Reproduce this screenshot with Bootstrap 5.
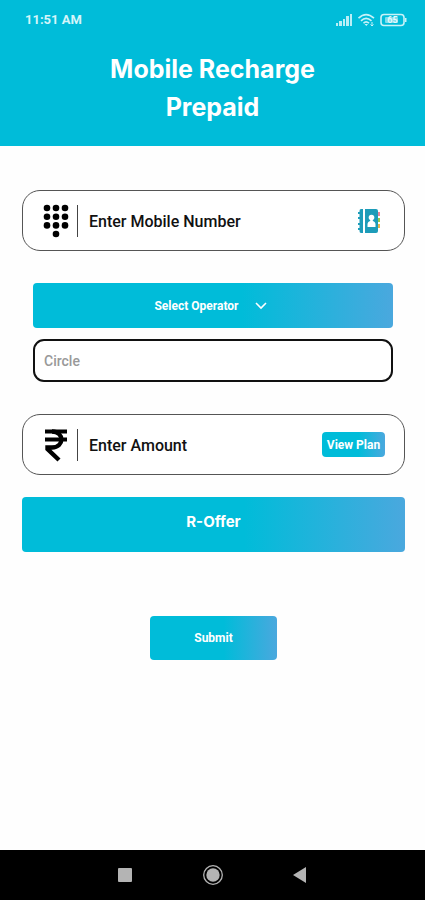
<!DOCTYPE html>
<html lang="en">
<head>
<meta charset="utf-8">
<meta name="viewport" content="width=device-width, initial-scale=1">
<title>Mobile Recharge Prepaid</title>
<link href="https://cdn.jsdelivr.net/npm/bootstrap@5.3.0/dist/css/bootstrap.min.css" rel="stylesheet">
<style>
  :root { --brand: #00bcd9; --brand-end: #4aa8de; --fade: linear-gradient(90deg, var(--brand) 58%, var(--brand-end)); }
  body { font-family: Roboto, "Liberation Sans", sans-serif; background: #fefefe; color: #111; }
  .app-header { background: var(--brand); padding-bottom: 20px; }
  .status-bar { height: 40px; padding: 0 17px 0 25px; font-size: 13px; font-weight: 700; color: #d5f5fa; }
  .app-title { font-family: Inter, sans-serif; font-size: 25px; line-height: 38px; font-weight: 700; padding: 10px 80px 0; }
  .recharge-form { padding: 44px 20px 0 22px; }
  .field-box { height: 61px; border: 1px solid #555; border-radius: 18px; padding: 0 19px 0 20px; background: #fff; }
  .field-icon { border-right: 1px solid #444; width: 35px; height: 32px; }
  .field-input, .field-input:focus { border: 0; background: transparent; box-shadow: none; padding: 2px 0 0 11px; font-size: 16px; font-weight: 500; min-width: 0; }
  .field-input::placeholder { color: #111; opacity: 1; }
  .fade-btn, .fade-btn:hover, .fade-btn:active { background: var(--fade); color: #fff; border: 0; border-radius: 4px; }
  .inset-group { margin: 32px 12px 32px 11px; gap: 11px; }
  .operator-select { height: 45px; border: 0; border-radius: 4px; color: #fff; font-size: 12px; font-weight: 700; text-align-last: center; padding: 0 33px 0 0;
    background-image: url("data:image/svg+xml,%3Csvg xmlns='http://www.w3.org/2000/svg' viewBox='0 0 12 8'%3E%3Cpath d='M1 1l5 5 5-5' fill='none' stroke='white' stroke-width='1.6'/%3E%3C/svg%3E"), var(--fade);
    background-size: 12px 8px, 100% 100%; background-position: calc(50% + 48px) 50%, 0 0; background-repeat: no-repeat; }
  .operator-select option { color: #111; }
  .circle-input, .circle-input:focus { height: 43px; border: 2px solid #111; border-radius: 11px; padding: 0 9px; font-size: 14px; font-weight: 500; box-shadow: none; }
  .circle-input::placeholder { color: #999; opacity: 1; }
  .plan-btn { font-size: 12px; font-weight: 700; width: 63px; height: 25px; }
  .offer-btn { height: 55px; margin-top: 22px; font-family: Inter, sans-serif; font-size: 15px; font-weight: 700; padding: 0 0 4px; }
  .submit-btn { width: 127px; height: 44px; margin-top: 64px; font-size: 12px; font-weight: 700; }
  .system-nav { height: 50px; background: #000; padding: 0 112px; }
  .system-nav button { width: 26px; height: 26px; }
</style>
</head>
<body>
<div class="d-flex flex-column min-vh-100">
  <header class="app-header text-white">
    <div class="status-bar d-flex align-items-center justify-content-between">
      <span>11:51 AM</span>
      <div class="d-flex align-items-center">
        <svg width="72" height="14" viewBox="0 0 72 14" role="img" aria-label="Signal, Wi-Fi, battery 65 percent">
          <g fill="#b9eef6">
            <rect x="0" y="10" width="2" height="3"/><rect x="3" y="8" width="3" height="5"/><rect x="7" y="6" width="2" height="7"/><rect x="10" y="3" width="3" height="10"/><rect x="14" y="1" width="2" height="12"/>
          </g>
          <g fill="none" stroke="#c8f2f8" stroke-width="1.600">
            <path d="M22.500 5.200Q30 -2 38 5.200M25 7.800Q30 3 35.500 7.800M27.500 10.200Q30 7.500 33 10.200"/>
            <path d="M36 9v4M34.500 11.500l1.500 1.500 1.500-1.500" stroke-width="1"/>
            <rect x="45" y="1.500" width="23" height="11" rx="3"/>
          </g>
          <path d="M28.500 11h3.500l-1.700 2zM69 5h1.500v4H69z" fill="#c8f2f8"/>
          <rect x="49" y="4" width="13" height="6" rx="1" fill="#7edcea"/>
          <text x="56.500" y="10.200" text-anchor="middle" font-size="9" font-weight="700" fill="#e5fafd">65</text>
        </svg>
      </div>
    </div>
    <h1 class="app-title text-center mb-0">Mobile Recharge Prepaid</h1>
  </header>

  <main class="flex-grow-1">
    <form class="recharge-form d-flex flex-column">
      <div class="field-box d-flex align-items-center">
        <label class="field-icon d-flex align-items-center flex-shrink-0" for="mobile">
          <svg width="26" height="34" viewBox="0 0 26 34" fill="#000" aria-hidden="true">
            <circle cx="4" cy="4" r="3.300"/><circle cx="13" cy="4" r="3.300"/><circle cx="22" cy="4" r="3.300"/>
            <circle cx="4" cy="12.700" r="3.300"/><circle cx="13" cy="12.700" r="3.300"/><circle cx="22" cy="12.700" r="3.300"/>
            <circle cx="4" cy="21.400" r="3.300"/><circle cx="13" cy="21.400" r="3.300"/><circle cx="22" cy="21.400" r="3.300"/>
            <circle cx="13" cy="30" r="3.300"/>
          </svg>
        </label>
        <input class="field-input form-control" id="mobile" type="tel" placeholder="Enter Mobile Number" aria-label="Mobile number">
        <button class="btn border-0 p-0 me-1 lh-1" type="button" aria-label="Choose from contacts">
          <svg width="24" height="26" viewBox="0 0 24 26" aria-hidden="true">
            <path d="M4 1h2v24H4q-1.500 0-1.500-2v-1H1v-2h1.500v-3H1v-2h1.500v-4H1V9h1.500V6H1V4h1.500V3q0-2 1.500-2z" fill="#1d9cb9"/>
            <path d="M8 1H19q2 0 2 2v20q0 2-2 2H8z" fill="#1d9cb9"/>
            <circle cx="14.500" cy="9.500" r="2.800" fill="#fff"/><path d="M10.500 19v-2.500q0-3 2.700-3.500v-2h2.600v2q2.700.5 2.700 3.500V19z" fill="#fff"/>
            <path d="M21 4h2v4h-2z" fill="#e8849a"/><path d="M21 10h2v4h-2z" fill="#97c94a"/><path d="M21 16h2v4h-2z" fill="#e6b34b"/>
          </svg>
        </button>
      </div>

      <div class="inset-group d-flex flex-column">
        <select class="operator-select form-select" aria-label="Operator">
          <option>Select Operator</option>
        </select>
        <input class="circle-input form-control" type="text" placeholder="Circle" aria-label="Circle">
      </div>

      <div class="field-box d-flex align-items-center">
        <label class="field-icon d-flex align-items-center flex-shrink-0" for="amount">
          <svg width="26" height="34" viewBox="0 0 26 34" fill="none" stroke="#000" aria-hidden="true">
            <path d="M2 3.500h22M2 11.500h22" stroke-width="3.800"/>
            <path d="M9 3.500C21.500 3.500 21.500 19.500 9 19.500H4.500v1.500L16 32" stroke-width="4.400"/>
          </svg>
        </label>
        <input class="field-input form-control" id="amount" type="text" inputmode="decimal" placeholder="Enter Amount" aria-label="Amount">
        <button class="plan-btn fade-btn btn p-0 flex-shrink-0" type="button">View Plan</button>
      </div>

      <button class="offer-btn fade-btn btn" type="button">R-Offer</button>
      <button class="submit-btn fade-btn btn p-0 align-self-center" type="submit">Submit</button>
    </form>
  </main>

  <nav class="system-nav d-flex align-items-center justify-content-between" aria-label="System">
    <button class="btn border-0 p-0 lh-1" type="button" aria-label="Recent apps">
      <svg width="20" height="20" viewBox="0 0 20 20"><rect x="3" y="3" width="14" height="14" rx="1" fill="#b4b4b4"/></svg>
    </button>
    <button class="btn border-0 p-0 lh-1" type="button" aria-label="Home">
      <svg width="22" height="22" viewBox="0 0 22 22"><circle cx="11" cy="11" r="9.300" fill="none" stroke="#b4b4b4" stroke-width="1.300"/><circle cx="11" cy="11" r="6.700" fill="#b4b4b4"/></svg>
    </button>
    <button class="btn border-0 p-0 lh-1" type="button" aria-label="Back">
      <svg width="20" height="20" viewBox="0 0 20 20"><path d="M3 10L16 2v16z" fill="#b4b4b4"/></svg>
    </button>
  </nav>
</div>
<script src="https://cdn.jsdelivr.net/npm/bootstrap@5.3.0/dist/js/bootstrap.bundle.min.js"></script>
</body>
</html>
